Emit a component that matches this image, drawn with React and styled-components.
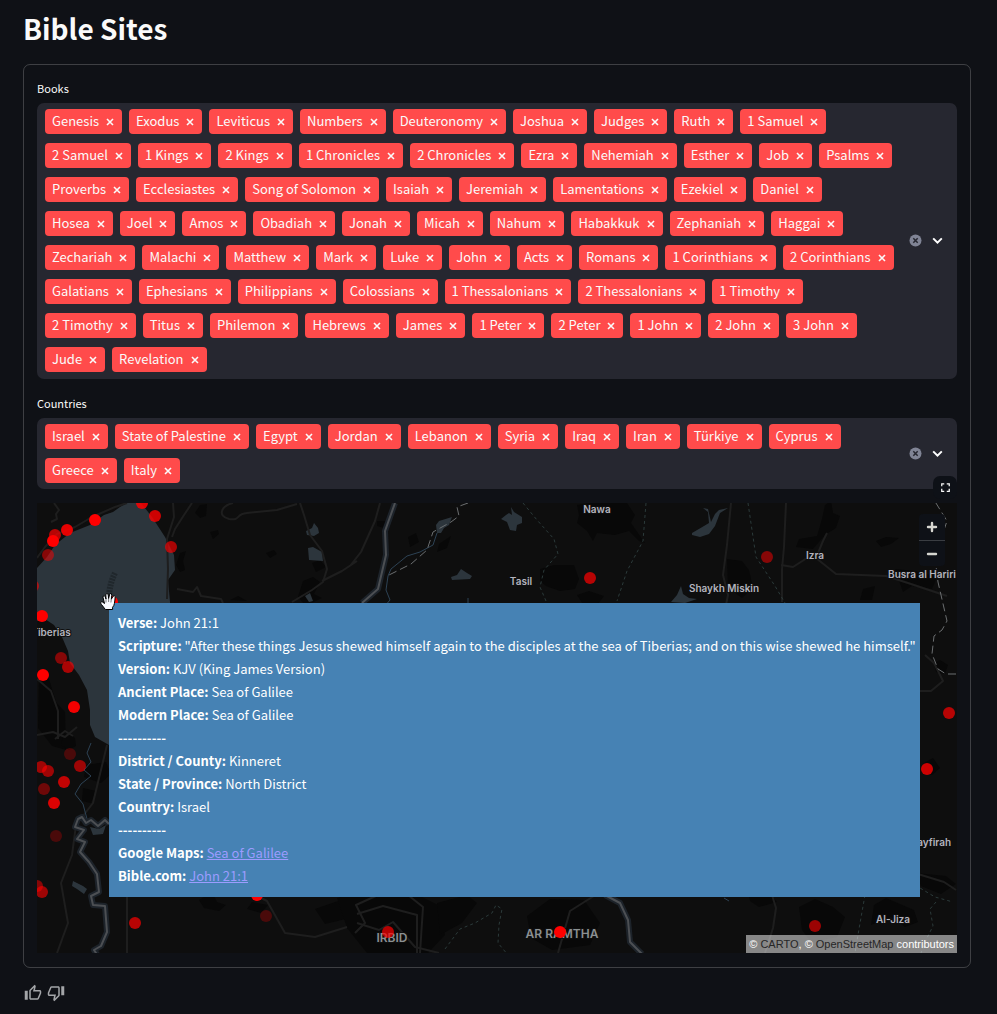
import React from 'react';
import styled, { createGlobalStyle } from 'styled-components';
import { MdOutlineThumbUp, MdOutlineThumbDown, MdFullscreen } from 'react-icons/md';

const GlobalStyle = createGlobalStyle`
  * { box-sizing: border-box; }
  body {
    margin: 0;
    background: #0f1116;
    color: #fafafa;
    font-family: "Noto Sans CJK SC", "Noto Sans", sans-serif;
    font-size: 13px;
    line-height: 23px;
  }
  button { font: inherit; color: inherit; border: 0; padding: 0; background: none; cursor: pointer; }
`;

const Page = styled.main`
  padding: 7px 26px 8px 23px;
`;

const Title = styled.h1`
  margin: 0 0 15px;
  font-size: 28px;
  line-height: 42px;
  font-weight: 700;
`;

const Card = styled.section`
  border: 1px solid rgba(250, 250, 250, 0.2);
  border-radius: 7px;
  padding: 13px 13px 14px;
  display: flex;
  flex-direction: column;
  gap: 14px;
`;

const Field = styled.div`
  display: flex;
  flex-direction: column;
  gap: 5px;
`;

const FieldLabel = styled.h2`
  margin: 0;
  font-size: 11px;
  font-weight: 400;
  line-height: 20px;
`;

const SelectBox = styled.div`
  display: flex;
  align-items: center;
  background: #262730;
  border-radius: 7px;
  padding: 6px 13px ${(p) => (p.$tall ? '7px' : '6px')} 8px;
`;

const TagList = styled.ul`
  flex: 1;
  min-width: 0;
  margin: 0;
  padding: 0;
  list-style: none;
  display: flex;
  flex-wrap: wrap;
  gap: 9px 7px;
`;

const Tag = styled.li`
  display: flex;
  align-items: center;
  gap: 6px;
  height: 25px;
  padding: 0 7px 2px;
  border-radius: 4px;
  background: #ff4b4b;
  white-space: nowrap;
`;

const TagRemove = styled.button`
  display: flex;
  align-items: flex-end;
  width: 10px;
  height: 12px;
`;

const BoxActions = styled.div`
  display: flex;
  align-items: center;
  gap: 9px;
  margin-left: 14px;
`;

const IconButton = styled.button`
  display: flex;
`;

const MapFrame = styled.div`
  position: relative;
  height: 450px;
`;

const MapCanvas = styled.svg`
  display: block;
  width: 100%;
  height: 100%;
  background: #0e0e0e;
`;

const FullscreenButton = styled.button`
  position: absolute;
  right: 0;
  top: -27px;
  width: 24px;
  height: 23px;
  border-radius: 7px;
  background: #0e1117;
  display: flex;
  align-items: center;
  justify-content: center;
`;

const ZoomControl = styled.div`
  position: absolute;
  right: 12px;
  top: 11px;
  width: 26px;
  border-radius: 4px;
  background: #0e1117;
`;

const ZoomButton = styled.button`
  display: flex;
  width: 100%;
  height: 26px;
  align-items: center;
  justify-content: center;
  & + & { border-top: 1px solid #3a3d42; }
`;

const Attribution = styled.div`
  position: absolute;
  right: 0;
  bottom: 0;
  height: 18px;
  padding: 0 3px;
  background: rgba(255, 255, 255, 0.5);
  color: #fff;
  font-family: "Liberation Sans", Arial, sans-serif;
  font-size: 11px;
  line-height: 18px;
  white-space: nowrap;
  a { color: #262626; text-decoration: none; }
`;

const Tooltip = styled.div`
  position: absolute;
  left: 72px;
  top: 100px;
  padding: 8px 4px 10px 9px;
  background: #4682b4;
  color: #fff;
  white-space: nowrap;
`;

const TooltipRow = styled.div`
  line-height: 23px;
  a { color: #9c9cff; }
`;

const Cursor = styled.svg`
  position: absolute;
  left: 62px;
  top: 89px;
`;

const Feedback = styled.footer`
  display: flex;
  gap: 5px;
  padding: 16px 1px 0;
  color: #a3a5a8;
`;

const BOOKS = [
  'Genesis', 'Exodus', 'Leviticus', 'Numbers', 'Deuteronomy', 'Joshua', 'Judges', 'Ruth', '1 Samuel',
  '2 Samuel', '1 Kings', '2 Kings', '1 Chronicles', '2 Chronicles', 'Ezra', 'Nehemiah', 'Esther', 'Job', 'Psalms',
  'Proverbs', 'Ecclesiastes', 'Song of Solomon', 'Isaiah', 'Jeremiah', 'Lamentations', 'Ezekiel', 'Daniel',
  'Hosea', 'Joel', 'Amos', 'Obadiah', 'Jonah', 'Micah', 'Nahum', 'Habakkuk', 'Zephaniah', 'Haggai',
  'Zechariah', 'Malachi', 'Matthew', 'Mark', 'Luke', 'John', 'Acts', 'Romans', '1 Corinthians', '2 Corinthians',
  'Galatians', 'Ephesians', 'Philippians', 'Colossians', '1 Thessalonians', '2 Thessalonians', '1 Timothy',
  '2 Timothy', 'Titus', 'Philemon', 'Hebrews', 'James', '1 Peter', '2 Peter', '1 John', '2 John', '3 John',
  'Jude', 'Revelation',
];

const COUNTRIES = [
  'Israel', 'State of Palestine', 'Egypt', 'Jordan', 'Lebanon', 'Syria', 'Iraq', 'Iran', 'Türkiye', 'Cyprus',
  'Greece', 'Italy',
];

// [x, y, opacity]
const SITES = [
  [105, 0, 0.85], [118, 13, 0.8], [58, 17, 1], [30, 27, 0.9], [18, 32, 0.7], [16, 38, 1], [11, 52, 0.5],
  [134, 44, 0.65], [5, 113, 1], [-4, 83, 0.6], [75, 99, 1], [24, 155, 0.5], [31, 164, 0.65], [6, 172, 1],
  [37, 204, 0.95], [33, 251, 0.25], [43, 263, 0.6], [4, 264, 0.6], [11, 268, 0.6], [7, 286, 0.4],
  [27, 279, 0.75], [17, 300, 0.85], [19, 333, 0.25], [0, 383, 0.5], [5, 389, 0.6], [98, 420, 0.7],
  [220, 392, 1], [229, 413, 0.25], [351, 429, 0.7], [523, 429, 1], [553, 75, 0.7], [730, 54, 0.5],
  [912, 210, 0.7], [890, 266, 0.8], [778, 423, 0.6],
];

const TOWNS = [
  [560, 10, 'Nawa'], [484, 82, 'Tasil'], [778, 56, 'Izra'], [687, 89, 'Shaykh Miskin'],
  [885, 75, 'Busra al Hariri'], [14, 133, 'Tiberias'], [888, 343, 'Busayfirah'], [856, 420, 'Al-Jiza'],
];

const SETTLED = [
  'M540 2l12-2h38l8 12-4 8 14 20-6-2-10-10-14 4-18-2-4 8-6-10-10-8 2-8z',
  'M503 66l14-4h20l5 14-4 10-15 2-14-5-6-5z', 'M540 92l12-4 15 5-6 8-14 2z',
  'M163 2l7-1-1 12-6 2-5-5z', 'M173 29l8-2 1 4-6 5z', 'M143 50l6-2-3 10 2 9-5 2-4-7z', 'M229 50l8-3 3 4-7 4z',
  'M266 78l10-4 7 5-6 12 8 4-16 8-8-9z', 'M275 60l8-3 6 7-10 5z', 'M193 97l8-4 9 5z',
  'M340 18h9l-2 7-7-2z', 'M371 34l8-4 3 9-9 5z', 'M402 41l12-8-4 12-10 4z',
  'M788 2l6-4 2 12 7 3-4 12-11 7-12 14-17-2 3-8 18-3 5-17z', 'M839 38l10-4 13 1-8 6-10 3z',
  'M690 56l15 2 7 9 4 18-11 10-14-10z', 'M858 66l20 2 22 6-5 12-20-3-9 6z', 'M826 86l12-3-3 14h-12z',
  'M2 170l10 6 7 23 9 10 1 38-14-4-14-18z',
  'M26 233l6-2 6 4 1 8-7 4-8-5z', 'M49 262l20-3 5 12-10 9-17-6z', 'M46 285l13 3-5 12-9-2z',
  'M162 397l13-8 5 10 9 3-7 6-15-3z', 'M215 399l16 3-7 8-14-4z', 'M278 406l29-10 17 5-7 13-29 7z',
  'M300 395l35-10 36 2 30 15 7 30-17 18h-61l-20-25z', 'M400 400l30-8 10 8-15 20-22 12z',
  'M490 413l23-17 34 1 16 23-10 22-38 5-21-12z', 'M762 404l16-8 18 8 12 10-8 20-26 5-9-12z',
  'M837 402l12-7 28 12 4 12-13 5-14-10-20 8z', 'M710 385l22 5 8 9-18 5-9-6z', 'M887 260l9-5 7 10-8 7-9-3z',
  'M879 370l30 3 10 8-15 10-20-8z', 'M897 160l6-3 8 5-3 9-9-2z', 'M874 205l6 4-2 9-7-4z',
];

const WATER = [
  'M90 0H104L115 14 128 34 137 52 138 67 131 77 133 99V242H72L58 234 53 222V207L50 187 42 172 33 160 31 148 25 134 17 122 8 116 0 118V65L10 54 18 42 33 30 53 22 67 12 76 9 83 4z',
  'M269 28l6-3 2-5 4 5 1 5-5 3-7-1z', 'M271 45l5-1 9 5 1 9-14-1z', 'M268 93l5-3 3 8-4 1z',
  'M469 12l3-2 3 2-1-8 3 5 8 5 0 6-5 2-1 6-6-1-3-8-6-3z',
  'M399 22l3-4 13-4-3 8-5 3-3 5-4 0z',
  'M414 74l6-2 4-6 6 4 5 3-2 3-18 1z',
  'M655 30l12-7 5-3-1-11-5-4 5 1 3 13 4-8 4-4 9-2-8 5-5 13-6 8-9 3-8-2z',
  'M634 99l6-7 4-9 2 8 6 4 8 1-12 4z',
  'M36 378l10 5 4 3-3 5-7-5-5-3z', 'M53 324l9 2 7-4-3 9-10 1z',
];

const ROADS = [
  'M17 0l5 7-3 4 1 5-6 3M90 0L78 4 55 14 38 24 20 31 8 44 0 55', 'M136 0l1 14-7 22 1 30-1 30', 'M155 0l-8 12-9 14-3 8',
  'M196 0c-12 3-16 13-4 16 12 2 6-5 18-6l30-3 20-6', 'M263 0l4 12 6 20 12 16 5 18-4 13-11 8-20 12',
  'M140 86l16 3 4-5 4 9 20 3 2 4', 'M320 58l-15 10-20 10M343 0l-5 18-14 31-11 14', 'M694 0l-4 42-4 30 5 20-2 10',
  'M749 0l-2 44-2 22v33', 'M744 62l12 2 14-9h9l20 16 50 2 22 7 39 13', 'M779 55l7-17 4-8',
  'M70 242l-14 58-17 22-4 30-11 28 7 40-11 30', 'M90 393v57', 'M220 393l10 5 18 32 30 4 32-10',
  'M371 392l15 12-3 46M320 411l26-8 34 9v38M318 430l10-10-9-18 22-10 27-4', 'M521 450l12-42 27-17',
  'M735 392l4 13-3 20-8 25', 'M881 371l26 8 12 8', 'M879 188h15l12-10-9-18-9-8', 'M0 176l14 12 7 20v28M18 236l10-8 8 5',
  'M320 420l22 7 14-8 22 25 24 6M0 232l16-3 12 5 12-10',
];

const HIGHWAYS = [
  'M358 0l-10 28 1 24-8 34-16 14', 'M568 392l15 8 8 17 2 22 12 12',
  'M72 321l-4-4-7 6-7-6-5 3-4-6-4 2-3 8 9 3-7 9 8 3-5 10 9 10 8 12 2 18-8 4 2 9 12 1 2 26-6 14-7 4 8 12-1 16-7 5-6-2-6 8',
];

const BORDERS = [
  'M431 0l-11 4 2 9-8 6-18 10-6 18-16 14-24 12',
  'M919 171h-10l-8-5-6-15 2-18 8-6 5-9-9-39-4-32 10-20 3-9-16-26-13-36',
];

const TRACKS = [
  'M486 0l14 17 17 19 4 15-14 16-4 17 6 14', 'M609 0l-3 38-16 30-10 30', 'M711 0l8 54 19 29 10 17',
  'M408 446l15-20 15-6 17-10 4-8 6 4-3 16-1 18 10 12', 'M828 392l-6 34-4 24', 'M878 382l20 12 18 5M899 399l-6 7 3 17-6 12-6 15',
];

const STREAMS = [
  'M400 30l-4 12-13 7-13 4-16 13-3 7-2 14 4 10-5 6', 'M54 240l-4 10 4 9-7 8 7 6-10 8-6 10 8 10 4 15 5 4',
  'M431 95v6M687 395l5 3',
];

function Map() {
  return (
    <MapCanvas viewBox="0 0 920 450" preserveAspectRatio="xMidYMid slice" role="img" aria-label="Map of Bible sites">
      <g fill="#080808">{SETTLED.map((d) => <path key={d} d={d} />)}</g>
      <g fill="#2c353c">{WATER.map((d) => <path key={d} d={d} />)}</g>
      <path d="M78 70q-6 12-6 26" stroke="#20272c" strokeWidth="6" fill="none" strokeDasharray="2 1" />
      <g fill="none" strokeLinejoin="round">
        <g stroke="#1e1e1e" strokeWidth="2">{ROADS.map((d) => <path key={d} d={d} />)}</g>
        <g stroke="#2d4254">{STREAMS.map((d) => <path key={d} d={d} />)}</g>
        <g stroke="#2b3a3a" strokeDasharray="3 3">{TRACKS.map((d) => <path key={d} d={d} />)}</g>
        <g stroke="#1d232a" strokeWidth="6">{HIGHWAYS.map((d) => <path key={d} d={d} />)}</g>
        <g stroke="#4c4f53" strokeWidth="2">{HIGHWAYS.map((d) => <path key={d} d={d} />)}</g>
        <g stroke="#6b6e70" strokeDasharray="8 4">{BORDERS.map((d) => <path key={d} d={d} />)}</g>
      </g>
      <g fill="#b3b3bd" stroke="#0e0e0e" strokeWidth="2" paintOrder="stroke" fontFamily="Inter, sans-serif" fontWeight="600" fontSize="10" textAnchor="middle">
        {TOWNS.map(([x, y, name]) => <text key={name} x={x} y={y}>{name}</text>)}
        <g fill="#8b9092" fontSize="12">
          <text x="355" y="439">IRBID</text>
          <text x="525" y="435">AR RAMTHA</text>
        </g>
      </g>
      <g fill="#f00">
        {SITES.map(([x, y, o]) => <circle key={`${x}-${y}`} cx={x} cy={y} r="6" fillOpacity={o} />)}
      </g>
    </MapCanvas>
  );
}

function MultiSelect({ label, items, tall }) {
  const id = `${label.toLowerCase()}-label`;
  return (
    <Field role="group" aria-labelledby={id}>
      <FieldLabel id={id}>{label}</FieldLabel>
      <SelectBox $tall={tall}>
        <TagList>
          {items.map((name) => (
            <Tag key={name}>
              {name}
              <TagRemove aria-label={`Remove ${name}`}>
                <svg width="10" height="10" viewBox="0 0 10 10" stroke="currentColor" strokeWidth="1.6">
                  <path d="M2 2l6 6M8 2l-6 6" />
                </svg>
              </TagRemove>
            </Tag>
          ))}
        </TagList>
        <BoxActions>
          <IconButton aria-label={`Clear ${label}`}>
            <svg width="13" height="13" viewBox="0 0 13 13">
              <circle cx="6.5" cy="6.5" r="6" fill="#808495" />
              <path d="M4.3 4.3l4.4 4.4M8.7 4.3L4.3 8.7" stroke="#262730" strokeWidth="1.5" />
            </svg>
          </IconButton>
          <IconButton aria-label={`Open ${label}`}>
            <svg width="13" height="13" viewBox="0 0 13 13" fill="none" stroke="#fff" strokeWidth="2">
              <path d="M2.2 4.4l4.3 4.2 4.3-4.2" />
            </svg>
          </IconButton>
        </BoxActions>
      </SelectBox>
    </Field>
  );
}

const DETAILS = [
  ['Verse:', 'John 21:1'],
  ['Scripture:', '"After these things Jesus shewed himself again to the disciples at the sea of Tiberias; and on this wise shewed he himself."'],
  ['Version:', 'KJV (King James Version)'],
  ['Ancient Place:', 'Sea of Galilee'],
  ['Modern Place:', 'Sea of Galilee'],
  ['----------'],
  ['District / County:', 'Kinneret'],
  ['State / Province:', 'North District'],
  ['Country:', 'Israel'],
  ['----------'],
  ['Google Maps:', 'Sea of Galilee', true],
  ['Bible.com:', 'John 21:1', true],
];

export default function App() {
  return (
    <>
      <GlobalStyle />
      <Page>
        <Title>Bible Sites</Title>
        <Card>
          <MultiSelect label="Books" items={BOOKS} tall />
          <MultiSelect label="Countries" items={COUNTRIES} />
          <MapFrame>
            <Map />
            <FullscreenButton aria-label="Fullscreen"><MdFullscreen size={15} /></FullscreenButton>
            <ZoomControl>
              <ZoomButton aria-label="Zoom in">
                <svg width="12" height="12" viewBox="0 0 12 12" stroke="#d6d6d0" strokeWidth="2.4" strokeLinecap="round"><path d="M6 2v8M2 6h8" /></svg>
              </ZoomButton>
              <ZoomButton aria-label="Zoom out">
                <svg width="12" height="12" viewBox="0 0 12 12" stroke="#d6d6d0" strokeWidth="2.4" strokeLinecap="round"><path d="M2 6h8" /></svg>
              </ZoomButton>
            </ZoomControl>
            <Attribution>
              © <a href="#carto">CARTO</a>, © <a href="#osm">OpenStreetMap</a> contributors
            </Attribution>
            <Tooltip role="tooltip">
              {DETAILS.map(([name, value, link], i) => (
                <TooltipRow key={i}>
                  <b>{name}</b> {link ? <a href="#site">{value}</a> : value}
                </TooltipRow>
              ))}
            </Tooltip>
            <Cursor width="20" height="20" viewBox="0 0 20 20" aria-hidden="true">
              <path
                d="M6 17L2.5 12.5Q0.5 10.5 2 9.8 3.5 9.5 5.5 11.5L4 5.2Q4 3.6 5.3 3.8 6.2 4 7 7L6.8 2.8Q7.2 1.2 8.6 1.6 9.4 2 9.6 6.5L10.6 2.4Q11.3 1.2 12.5 1.9 13 2.4 12.3 7.2L14.2 4.2Q15.6 3.3 16.2 4.6 16 8 15.4 11.5 15 14 13.6 15.2V17.5H6.5z"
                fill="#f7faff" stroke="#000" strokeWidth="1" strokeLinejoin="round"
              />
              <path d="M7 7v3.5M9.6 6.5V10M12.3 7.2l-.4 3.3" stroke="#000" strokeWidth="0.5" fill="none" />
            </Cursor>
          </MapFrame>
        </Card>
        <Feedback>
          <IconButton aria-label="Good"><MdOutlineThumbUp size={18} /></IconButton>
          <IconButton aria-label="Bad"><MdOutlineThumbDown size={18} /></IconButton>
        </Feedback>
      </Page>
    </>
  );
}
